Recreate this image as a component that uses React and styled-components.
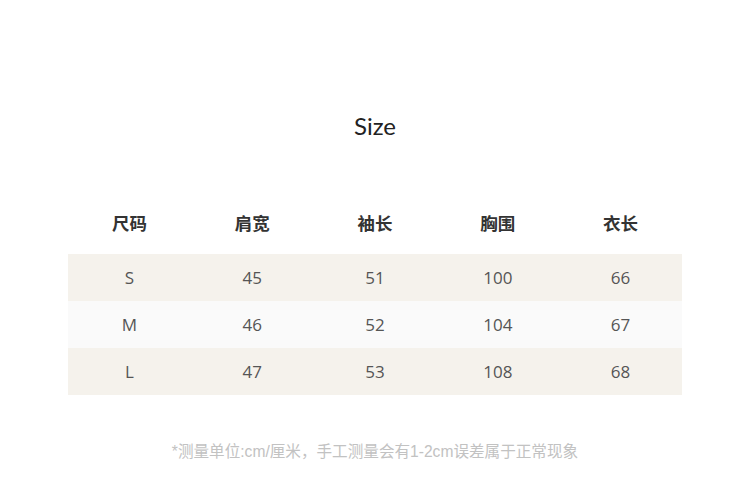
import React from 'react';
import styled, { createGlobalStyle } from 'styled-components';

const GlobalStyle = createGlobalStyle`
  html, body {
    margin: 0;
    padding: 0;
    background: #ffffff;
  }
`;

const Page = styled.div`
  width: 750px;
  height: 478px;
  display: flex;
  flex-direction: column;
  align-items: center;
  padding-top: 110px;
  box-sizing: border-box;
`;

const Title = styled.h1`
  margin: 0;
  font-family: Lato, "Open Sans", sans-serif;
  font-weight: 400;
  font-size: 24px;
  line-height: 32px;
  color: #222;
`;

const Table = styled.div`
  width: 614px;
  margin-top: 52px;
  display: flex;
  flex-direction: column;
`;

const Row = styled.div`
  display: grid;
  grid-template-columns: repeat(5, 1fr);
  height: ${(p) => (p.$head ? '60px' : '47px')};
  align-items: center;
  background: ${(p) => p.$bg || 'transparent'};
`;

const HeadCell = styled.div`
  text-align: center;
  padding-bottom: 4px;
  font-family: "Noto Sans CJK SC", sans-serif;
  font-weight: 700;
  font-size: 17.5px;
  color: #333;
`;

const Cell = styled.div`
  text-align: center;
  font-family: "Open Sans", "Noto Sans CJK SC", sans-serif;
  font-size: 17px;
  color: #555;
`;

const Note = styled.p`
  margin: 44px 0 0;
  font-family: "Liberation Sans", "Noto Sans CJK SC", sans-serif;
  font-size: 15.6px;
  color: #c2c2c2;
`;

const headers = ['尺码', '肩宽', '袖长', '胸围', '衣长'];

const rows = [
  { cells: ['S', '45', '51', '100', '66'], bg: '#f5f2ec' },
  { cells: ['M', '46', '52', '104', '67'], bg: '#fafafa' },
  { cells: ['L', '47', '53', '108', '68'], bg: '#f5f2ec' },
];

export default function App() {
  return (
    <>
      <GlobalStyle />
      <Page>
        <Title>Size</Title>
        <Table>
          <Row $head>
            {headers.map((h) => (
              <HeadCell key={h}>{h}</HeadCell>
            ))}
          </Row>
          {rows.map((r) => (
            <Row key={r.cells[0]} $bg={r.bg}>
              {r.cells.map((c, i) => (
                <Cell key={i}>{c}</Cell>
              ))}
            </Row>
          ))}
        </Table>
        <Note>*测量单位:cm/厘米，手工测量会有1-2cm误差属于正常现象</Note>
      </Page>
    </>
  );
}
